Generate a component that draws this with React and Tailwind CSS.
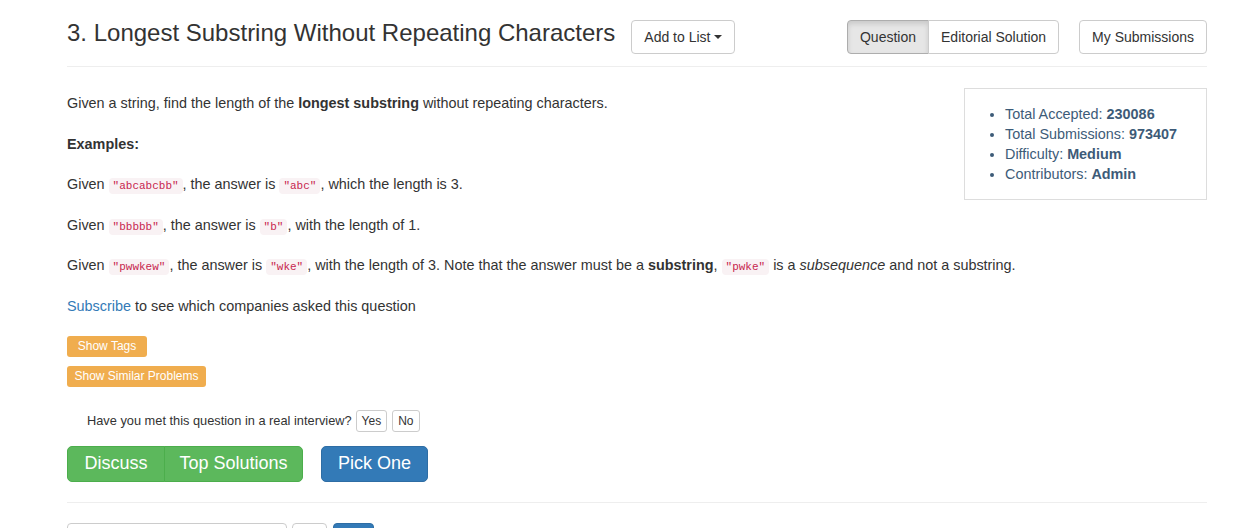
import React from "react";

const Code = ({ children }) => (
  <code className="rounded-[4px] bg-[#f9f2f4] px-[4px] py-[2px] font-['Liberation_Mono',monospace] text-[11px] leading-none text-[#c7254e]">
    {children}
  </code>
);

const Stat = ({ label, value }) => (
  <li>
    {label}: <b>{value}</b>
  </li>
);

export default function App() {
  return (
    <div className="min-h-screen bg-white font-['Liberation_Sans',Arial,sans-serif] text-[14.4px] text-[#333]">
      <div className="ml-[67px] w-[1140px]">
        {/* header */}
        <div className="flex items-start pt-[20px] text-[14px]">
          <h3 className="text-[24px] leading-[26px] font-normal text-[#333]">
            3. Longest Substring Without Repeating Characters
          </h3>
          <button className="ml-[16px] flex h-[34px] items-center gap-[4px] rounded-[4px] border border-[#ccc] bg-white px-[12px] text-[#333]">
            Add to List
            <span className="inline-block h-0 w-0 border-x-[4px] border-t-[4px] border-x-transparent border-t-[#333]" />
          </button>
          <div className="ml-auto flex">
            <button className="h-[34px] rounded-l-[4px] border border-[#adadad] bg-[#e6e6e6] px-[12px] shadow-[inset_0_3px_5px_rgba(0,0,0,0.125)]">
              Question
            </button>
            <button className="-ml-px h-[34px] rounded-r-[4px] border border-[#ccc] bg-white px-[12px]">
              Editorial Solution
            </button>
          </div>
          <button className="ml-[20px] h-[34px] rounded-[4px] border border-[#ccc] bg-white px-[12px]">
            My Submissions
          </button>
        </div>
        <div className="mt-[12px] border-t border-[#eee]" />

        {/* body: stats box floats right, text flows past it */}
        <div className="mt-[21px] flow-root">
          <div className="float-right w-[243px] border border-[#ddd] pt-[15px] pb-[15px]">
            <ul className="list-disc pl-[40px] leading-[20px] text-[#3d5b78]">
              <Stat label="Total Accepted" value="230086" />
              <Stat label="Total Submissions" value="973407" />
              <Stat label="Difficulty" value="Medium" />
              <Stat label="Contributors" value="Admin" />
            </ul>
          </div>
          <div className="space-y-[20.6px] pt-[5px] leading-[20px]">
            <p>
              Given a string, find the length of the <b>longest substring</b> without repeating characters.
            </p>
            <p>
              <b>Examples:</b>
            </p>
            <p>
              Given <Code>"abcabcbb"</Code>, the answer is <Code>"abc"</Code>, which the length is 3.
            </p>
            <p>
              Given <Code>"bbbbb"</Code>, the answer is <Code>"b"</Code>, with the length of 1.
            </p>
            <p>
              Given <Code>"pwwkew"</Code>, the answer is <Code>"wke"</Code>, with the length of 3. Note that the
              answer must be a <b>substring</b>, <Code>"pwke"</Code> is a <i>subsequence</i> and not a substring.
            </p>
            <p>
              <a className="text-[#337ab7]">Subscribe</a> to see which companies asked this question
            </p>
          </div>
        </div>

        <div className="mt-[20px] flex flex-col items-start gap-[9px]">
          <button className="h-[21px] w-[80px] rounded-[3px] bg-[#f0ad4e] text-[12px] leading-[21px] text-white">
            Show Tags
          </button>
          <button className="h-[21px] w-[139px] rounded-[3px] bg-[#f0ad4e] text-[12px] leading-[21px] text-white">
            Show Similar Problems
          </button>
        </div>

        <div className="mt-[23px] flex items-center pl-[20px] text-[12.8px]">
          <span>Have you met this question in a real interview?</span>
          <button className="ml-[4px] h-[22px] rounded-[3px] border border-[#ccc] bg-white px-[5px] text-[12px]">
            Yes
          </button>
          <button className="ml-[5px] h-[22px] rounded-[3px] border border-[#ccc] bg-white px-[5px] text-[12px]">
            No
          </button>
        </div>

        <div className="mt-[14px] flex items-center">
          <div className="flex">
            <button className="h-[36px] w-[98px] rounded-l-[5px] border border-[#4cae4c] bg-[#5cb85c] text-[18px] text-white">
              Discuss
            </button>
            <button className="-ml-px h-[36px] w-[139px] rounded-r-[5px] border border-[#4cae4c] bg-[#5cb85c] text-[18px] text-white">
              Top Solutions
            </button>
          </div>
          <button className="ml-[18px] h-[36px] w-[107px] rounded-[5px] border border-[#2e6da4] bg-[#337ab7] text-[18px] text-white">
            Pick One
          </button>
        </div>

        <div className="mt-[20px] border-t border-[#eee]" />

        <div className="mt-[20px] flex items-start">
          <div className="h-[34px] w-[220px] rounded-[4px] border border-[#ccc] bg-white" />
          <div className="ml-[5px] h-[34px] w-[35px] rounded-[4px] border border-[#ccc] bg-white" />
          <div className="ml-[6px] h-[34px] w-[41px] rounded-[4px] border border-[#2e6da4] bg-[#337ab7]" />
        </div>
      </div>
    </div>
  );
}
